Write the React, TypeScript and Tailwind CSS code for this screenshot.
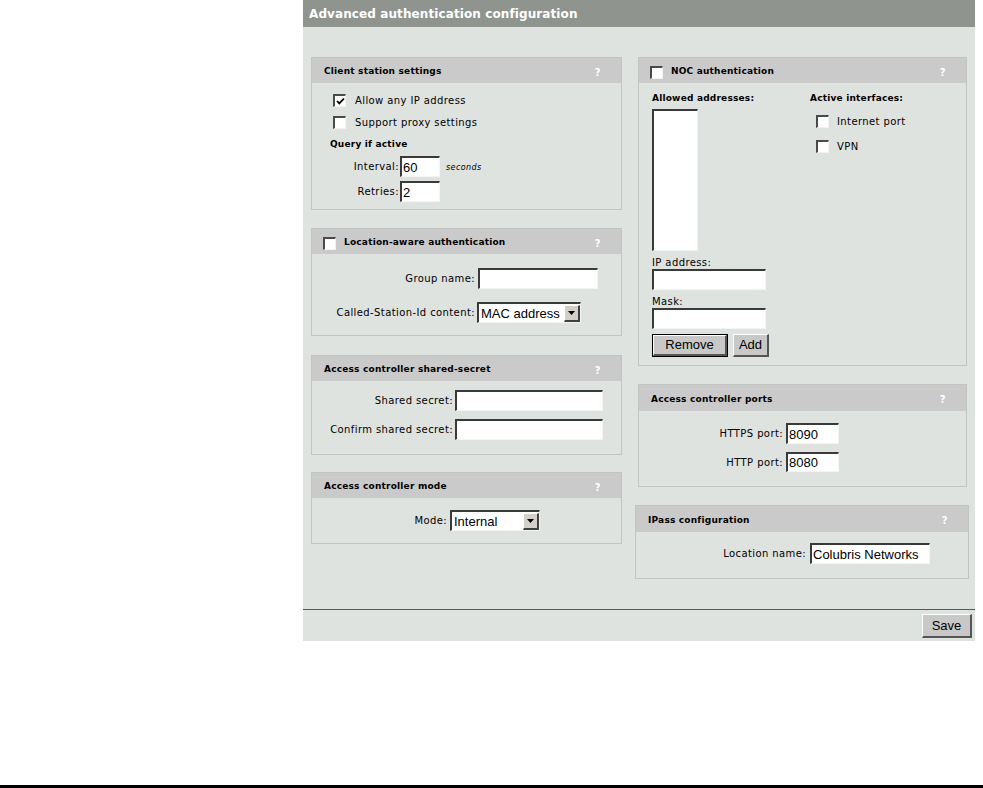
import React from "react";

const F = "font-['DejaVu_Sans',sans-serif]";

function Check({ checked = false }: { checked?: boolean }) {
  return (
    <div className="w-[13px] h-[13px] shrink-0 bg-white border-t-2 border-l-2 border-b border-r border-t-[#4a4a4a] border-l-[#4a4a4a] border-b-[#f2f2f2] border-r-[#f2f2f2] flex items-center justify-center">
      {checked && (
        <svg width="9" height="9" viewBox="0 0 9 9">
          <path d="M1 4 L3.3 6.4 L8 1.5" fill="none" stroke="#000" strokeWidth="1.8" />
        </svg>
      )}
    </div>
  );
}

function TextBox({ w, value = "", h = 21 }: { w: number; value?: string; h?: number }) {
  return (
    <div
      className="bg-white border-t-2 border-l-2 border-b border-r border-t-[#3a3a3a] border-l-[#3a3a3a] border-b-[#f4f4f4] border-r-[#f4f4f4] flex items-center pl-[1px] font-['Liberation_Sans',sans-serif] text-[13px] tracking-normal text-black leading-none overflow-hidden"
      style={{ width: w, height: h }}
    >
      {value}
    </div>
  );
}

function Select({ w, value }: { w: number; value: string }) {
  return (
    <div
      className="h-[21px] bg-white border-t-2 border-l-2 border-b border-r border-t-[#3a3a3a] border-l-[#3a3a3a] border-b-[#f4f4f4] border-r-[#f4f4f4] flex items-center justify-between font-['Liberation_Sans',sans-serif] text-[13px] tracking-normal text-black leading-none"
      style={{ width: w }}
    >
      <span className="pl-[2px]">{value}</span>
      <div className="w-[16px] h-[17px] bg-[#d4d0c8] border-t border-l border-b-2 border-r-2 border-t-[#ffffff] border-l-[#ffffff] border-b-[#404040] border-r-[#404040] flex items-center justify-center">
        <svg width="7" height="4" viewBox="0 0 7 4">
          <path d="M0 0 H7 L3.5 4 Z" fill="#000" />
        </svg>
      </div>
    </div>
  );
}

function Button({ label, w, isDefault = false }: { label: string; w: number; isDefault?: boolean }) {
  const inner = (
    <div className="h-full bg-[#c8c8c8] border-t border-l border-b-2 border-r-2 border-t-[#ffffff] border-l-[#ffffff] border-b-[#555555] border-r-[#555555] flex items-center justify-center font-['Liberation_Sans',sans-serif] text-[13px] tracking-normal text-black">
      {label}
    </div>
  );
  return (
    <div className={isDefault ? "h-[23px] border border-black" : "h-[23px]"} style={{ width: w }}>
      {inner}
    </div>
  );
}

function Panel({
  title,
  checkbox = false,
  height,
  headerH = 26,
  className = "",
  children,
}: {
  title: string;
  checkbox?: boolean;
  height: number;
  headerH?: number;
  className?: string;
  children: React.ReactNode;
}) {
  return (
    <div className={"border border-[#c2c4c2] flex flex-col " + className} style={{ height }}>
      <div
        className="bg-[#c9cac9] flex items-center justify-between pl-[11px] pr-[20px] pt-[3px] shrink-0"
        style={{ height: headerH - 1 }}
      >
        <div className="flex items-center">
          {checkbox && (
            <div className="mr-[8px]">
              <Check />
            </div>
          )}
          <span className={"font-['DejaVu_Sans',sans-serif] font-bold text-[9px] tracking-[0.2px] text-black " + (checkbox ? "" : "pl-[1px]")}>{title}</span>
        </div>
        <span className="font-['DejaVu_Sans',sans-serif] font-bold text-[10px] text-white">?</span>
      </div>
      <div className="flex-1 flex flex-col">{children}</div>
    </div>
  );
}

function LabeledRow({
  labelW,
  label,
  gap = 3,
  mt,
  children,
}: {
  labelW: number;
  label: string;
  gap?: number;
  mt: number;
  children: React.ReactNode;
}) {
  return (
    <div className="flex items-center" style={{ marginTop: mt }}>
      <div className="text-right text-[10px] text-black whitespace-nowrap" style={{ width: labelW, marginRight: gap }}>
        {label}
      </div>
      {children}
    </div>
  );
}

export default function App() {
  return (
    <div className={"w-[983px] h-[788px] bg-white flex flex-col " + F}>
      <div className="ml-[303px] w-[672px] bg-[#dfe3df]">
        <div className="h-[27px] bg-[#8f948f] flex items-center pl-[6px] text-white text-[12px] font-bold tracking-[0.1px]">
          Advanced authentication configuration
        </div>
        <div className="h-[582px] flex pt-[30px] pl-[8px] text-[10px] tracking-[0.4px] text-black">
          {/* Left column */}
          <div className="w-[311px] flex flex-col">
            <Panel title="Client station settings" height={153}>
              <div className="flex items-center h-[13px] mt-[11px] pl-[21px]">
                <Check checked />
                <span className="ml-[9px]">Allow any IP address</span>
              </div>
              <div className="flex items-center h-[13px] mt-[9px] pl-[21px]">
                <Check />
                <span className="ml-[9px]">Support proxy settings</span>
              </div>
              <div className="h-[14px] mt-[9px] pl-[18px] font-bold text-[9px] tracking-[0.2px] flex items-center">Query if active</div>
              <LabeledRow labelW={87} label="Interval:" gap={1} mt={4}>
                <TextBox w={40} value="60" />
                <span className="ml-[6px] italic text-[8px] mt-[3px]">seconds</span>
              </LabeledRow>
              <LabeledRow labelW={87} label="Retries:" gap={1} mt={4}>
                <TextBox w={40} value="2" />
              </LabeledRow>
            </Panel>

            <Panel title="Location-aware authentication" checkbox height={108} className="mt-[18px]">
              <LabeledRow labelW={163} label="Group name:" gap={3} mt={14}>
                <TextBox w={120} />
              </LabeledRow>
              <LabeledRow labelW={163} label="Called-Station-Id content:" gap={2} mt={13}>
                <Select w={104} value="MAC address" />
              </LabeledRow>
            </Panel>

            <Panel title="Access controller shared-secret" height={100} className="mt-[19px]">
              <LabeledRow labelW={141} label="Shared secret:" gap={2} mt={9}>
                <TextBox w={148} />
              </LabeledRow>
              <LabeledRow labelW={141} label="Confirm shared secret:" gap={2} mt={8}>
                <TextBox w={148} />
              </LabeledRow>
            </Panel>

            <Panel title="Access controller mode" height={72} className="mt-[17px]">
              <LabeledRow labelW={135} label="Mode:" gap={3} mt={12}>
                <Select w={90} value="Internal" />
              </LabeledRow>
            </Panel>
          </div>

          {/* Right column */}
          <div className="w-[334px] ml-[13px] flex flex-col">
            <Panel title="NOC authentication" checkbox height={309} className="ml-[3px] mr-[2px]">
              <div className="flex pl-[13px]">
                <div className="w-[158px] flex flex-col">
                  <div className="h-[12px] mt-[10px] font-bold text-[9px] tracking-[0.2px] flex items-center">Allowed addresses:</div>
                  <div className="mt-[4px] w-[46px] h-[142px] bg-white border-t-2 border-l-2 border-b border-r border-t-[#3a3a3a] border-l-[#3a3a3a] border-b-[#f0f0f0] border-r-[#f0f0f0]" />
                  <div className="h-[12px] mt-[5px] flex items-center">IP address:</div>
                  <div className="mt-[1px]">
                    <TextBox w={114} />
                  </div>
                  <div className="h-[12px] mt-[5px] flex items-center">Mask:</div>
                  <div className="mt-[1px]">
                    <TextBox w={114} />
                  </div>
                  <div className="flex mt-[5px]">
                    <Button label="Remove" w={76} isDefault />
                    <div className="ml-[5px]">
                      <Button label="Add" w={36} />
                    </div>
                  </div>
                </div>
                <div className="flex flex-col">
                  <div className="h-[12px] mt-[10px] font-bold text-[9px] tracking-[0.2px] flex items-center">Active interfaces:</div>
                  <div className="flex items-center h-[13px] mt-[10px] pl-[6px]">
                    <Check />
                    <span className="ml-[8px]">Internet port</span>
                  </div>
                  <div className="flex items-center h-[13px] mt-[12px] pl-[6px]">
                    <Check />
                    <span className="ml-[8px]">VPN</span>
                  </div>
                </div>
              </div>
            </Panel>

            <Panel title="Access controller ports" height={103} headerH={27} className="mt-[18px] ml-[3px] mr-[2px]">
              <LabeledRow labelW={144} label="HTTPS port:" gap={3} mt={12}>
                <TextBox w={53} value="8090" />
              </LabeledRow>
              <LabeledRow labelW={144} label="HTTP port:" gap={3} mt={8}>
                <TextBox w={53} value="8080" h={20} />
              </LabeledRow>
            </Panel>

            <Panel title="IPass configuration" height={74} headerH={27} className="mt-[18px]">
              <LabeledRow labelW={170} label="Location name:" gap={4} mt={11}>
                <TextBox w={120} value="Colubris Networks" />
              </LabeledRow>
            </Panel>
          </div>
        </div>
        <div className="h-[32px] border-t border-[#5a5a5a] flex justify-end items-start pt-[4px] pr-[3px]">
          <div className="w-[50px] h-[24px] bg-[#c8c8c8] border-t border-l border-b-2 border-r-2 border-t-[#ffffff] border-l-[#ffffff] border-b-[#555555] border-r-[#555555] flex items-center justify-center font-['Liberation_Sans',sans-serif] text-[13px] text-black">
            Save
          </div>
        </div>
      </div>
      <div className="mt-auto h-[3px] bg-black" />
    </div>
  );
}
